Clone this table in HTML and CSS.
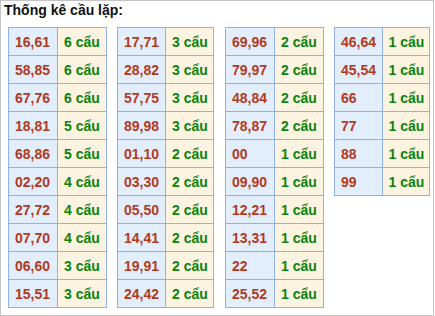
FILE: index.html
```html
<!DOCTYPE html>
<html>
<head>
<meta charset="utf-8">
<link rel="stylesheet" href="styles.css">
</head>
<body>
<div class="box">
  <div class="title">Thống kê cầu lặp:</div>
  <div class="tables">
    <table class="tbl w99">
      <tr><td class="num">16,61</td><td class="cnt">6 cẩu</td></tr>
      <tr><td class="num">58,85</td><td class="cnt">6 cẩu</td></tr>
      <tr><td class="num">67,76</td><td class="cnt">6 cẩu</td></tr>
      <tr><td class="num">18,81</td><td class="cnt">5 cẩu</td></tr>
      <tr><td class="num">68,86</td><td class="cnt">5 cẩu</td></tr>
      <tr><td class="num">02,20</td><td class="cnt">4 cẩu</td></tr>
      <tr><td class="num">27,72</td><td class="cnt">4 cẩu</td></tr>
      <tr><td class="num">07,70</td><td class="cnt">4 cẩu</td></tr>
      <tr><td class="num">06,60</td><td class="cnt">3 cẩu</td></tr>
      <tr><td class="num">15,51</td><td class="cnt">3 cẩu</td></tr>
    </table>
    <table class="tbl w97">
      <tr><td class="num">17,71</td><td class="cnt">3 cẩu</td></tr>
      <tr><td class="num">28,82</td><td class="cnt">3 cẩu</td></tr>
      <tr><td class="num">57,75</td><td class="cnt">3 cẩu</td></tr>
      <tr><td class="num">89,98</td><td class="cnt">3 cẩu</td></tr>
      <tr><td class="num">01,10</td><td class="cnt">2 cẩu</td></tr>
      <tr><td class="num">03,30</td><td class="cnt">2 cẩu</td></tr>
      <tr><td class="num">05,50</td><td class="cnt">2 cẩu</td></tr>
      <tr><td class="num">14,41</td><td class="cnt">2 cẩu</td></tr>
      <tr><td class="num">19,91</td><td class="cnt">2 cẩu</td></tr>
      <tr><td class="num">24,42</td><td class="cnt">2 cẩu</td></tr>
    </table>
    <table class="tbl w99 shift">
      <tr><td class="num">69,96</td><td class="cnt">2 cẩu</td></tr>
      <tr><td class="num">79,97</td><td class="cnt">2 cẩu</td></tr>
      <tr><td class="num">48,84</td><td class="cnt">2 cẩu</td></tr>
      <tr><td class="num">78,87</td><td class="cnt">2 cẩu</td></tr>
      <tr><td class="num">00</td><td class="cnt">1 cẩu</td></tr>
      <tr><td class="num">09,90</td><td class="cnt">1 cẩu</td></tr>
      <tr><td class="num">12,21</td><td class="cnt">1 cẩu</td></tr>
      <tr><td class="num">13,31</td><td class="cnt">1 cẩu</td></tr>
      <tr><td class="num">22</td><td class="cnt">1 cẩu</td></tr>
      <tr><td class="num">25,52</td><td class="cnt">1 cẩu</td></tr>
    </table>
    <table class="tbl w96">
      <tr><td class="num">46,64</td><td class="cnt">1 cẩu</td></tr>
      <tr><td class="num">45,54</td><td class="cnt">1 cẩu</td></tr>
      <tr><td class="num">66</td><td class="cnt">1 cẩu</td></tr>
      <tr><td class="num">77</td><td class="cnt">1 cẩu</td></tr>
      <tr><td class="num">88</td><td class="cnt">1 cẩu</td></tr>
      <tr><td class="num">99</td><td class="cnt">1 cẩu</td></tr>
    </table>
  </div>
</div>
</body>
</html>
```

FILE: styles.css
```css
html, body {
  margin: 0;
  padding: 0;
  background: #ffffff;
}
.box {
  width: 432px;
  height: 314px;
  border: 1px solid #c4c4c4;
  font-family: "Liberation Sans", Arial, sans-serif;
  font-weight: bold;
  font-size: 14px;
}
.title {
  padding: 1px 0 0 3px;
  height: 25px;
  line-height: 16px;
  color: #111111;
}
.tables {
  display: flex;
  align-items: flex-start;
  gap: 10px;
  padding-left: 7px;
}
.tbl {
  border-collapse: collapse;
  table-layout: fixed;
}
.tbl.w99 { width: 99px; }
.tbl.w97 { width: 97px; }
.tbl.w96 { width: 96px; }
.tbl.shift { margin-left: 1px; }
.tbl td {
  border: 1px solid #8fb1ec;
  height: 28px;
  padding: 0 6px;
  line-height: 16px;
  box-sizing: border-box;
  text-align: left;
  white-space: nowrap;
  overflow: hidden;
}
.tbl td.num {
  width: 50%;
  background: #e3eefd;
  color: #b23a1c;
}
.tbl td.cnt {
  background: #fdf3e1;
  color: #0b840b;
}
```
